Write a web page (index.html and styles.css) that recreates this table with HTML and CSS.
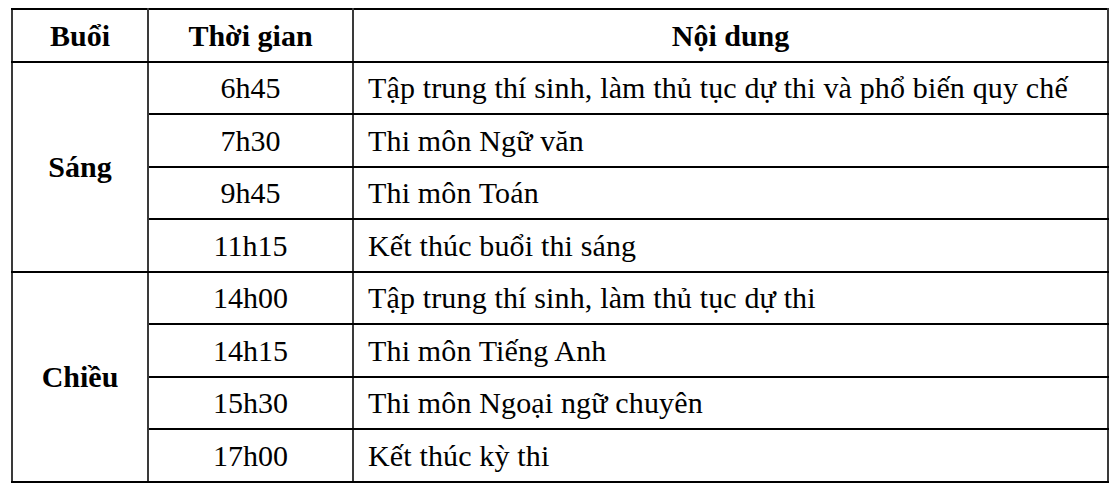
FILE: index.html
```html
<!DOCTYPE html>
<html lang="vi">
<head>
<meta charset="utf-8">
<link rel="stylesheet" href="styles.css">
</head>
<body>
<table class="schedule">
  <colgroup>
    <col class="c-session">
    <col class="c-time">
    <col class="c-content">
  </colgroup>
  <thead>
    <tr class="head">
      <th>Buổi</th>
      <th>Thời gian</th>
      <th>Nội dung</th>
    </tr>
  </thead>
  <tbody>
    <tr class="r-a">
      <td class="session" rowspan="4">Sáng</td>
      <td class="time">6h45</td>
      <td class="content">Tập trung thí sinh, làm thủ tục dự thi và phổ biến quy chế</td>
    </tr>
    <tr class="r-b">
      <td class="time">7h30</td>
      <td class="content">Thi môn Ngữ văn</td>
    </tr>
    <tr class="r-a">
      <td class="time">9h45</td>
      <td class="content">Thi môn Toán</td>
    </tr>
    <tr class="r-b">
      <td class="time">11h15</td>
      <td class="content">Kết thúc buổi thi sáng</td>
    </tr>
    <tr class="r-a group-start">
      <td class="session" rowspan="4">Chiều</td>
      <td class="time">14h00</td>
      <td class="content">Tập trung thí sinh, làm thủ tục dự thi</td>
    </tr>
    <tr class="r-b">
      <td class="time">14h15</td>
      <td class="content">Thi môn Tiếng Anh</td>
    </tr>
    <tr class="r-a">
      <td class="time">15h30</td>
      <td class="content">Thi môn Ngoại ngữ chuyên</td>
    </tr>
    <tr class="r-b">
      <td class="time">17h00</td>
      <td class="content">Kết thúc kỳ thi</td>
    </tr>
  </tbody>
</table>
</body>
</html>
```

FILE: styles.css
```css
html, body {
  margin: 0;
  padding: 0;
  background: #ffffff;
}

body {
  padding: 8px 0 0 11px;
  font-family: "Liberation Serif", "Times New Roman", serif;
  color: #000;
}

.schedule {
  border-collapse: collapse;
  table-layout: fixed;
  width: 1096px;
  border: 2px solid #000;
  font-size: 30px;
}

.c-session { width: 136px; }
.c-time { width: 205px; }
.c-content { width: 755px; }

.schedule th,
.schedule td {
  padding: 0;
  vertical-align: middle;
  border-top: 2px solid #000;
  border-bottom: 2px solid #000;
  border-left: 2px solid #3a3a3a;
  border-right: 2px solid #3a3a3a;
  line-height: 1;
}

.schedule th {
  font-weight: bold;
  text-align: center;
}

.head { height: 53px; }
.r-a { height: 52px; }
.r-b { height: 53px; }

.session {
  font-weight: bold;
  text-align: center;
}

.time {
  text-align: center;
}

.content {
  text-align: left;
  letter-spacing: 0.15px;
  padding-left: 14px !important;
}
```
